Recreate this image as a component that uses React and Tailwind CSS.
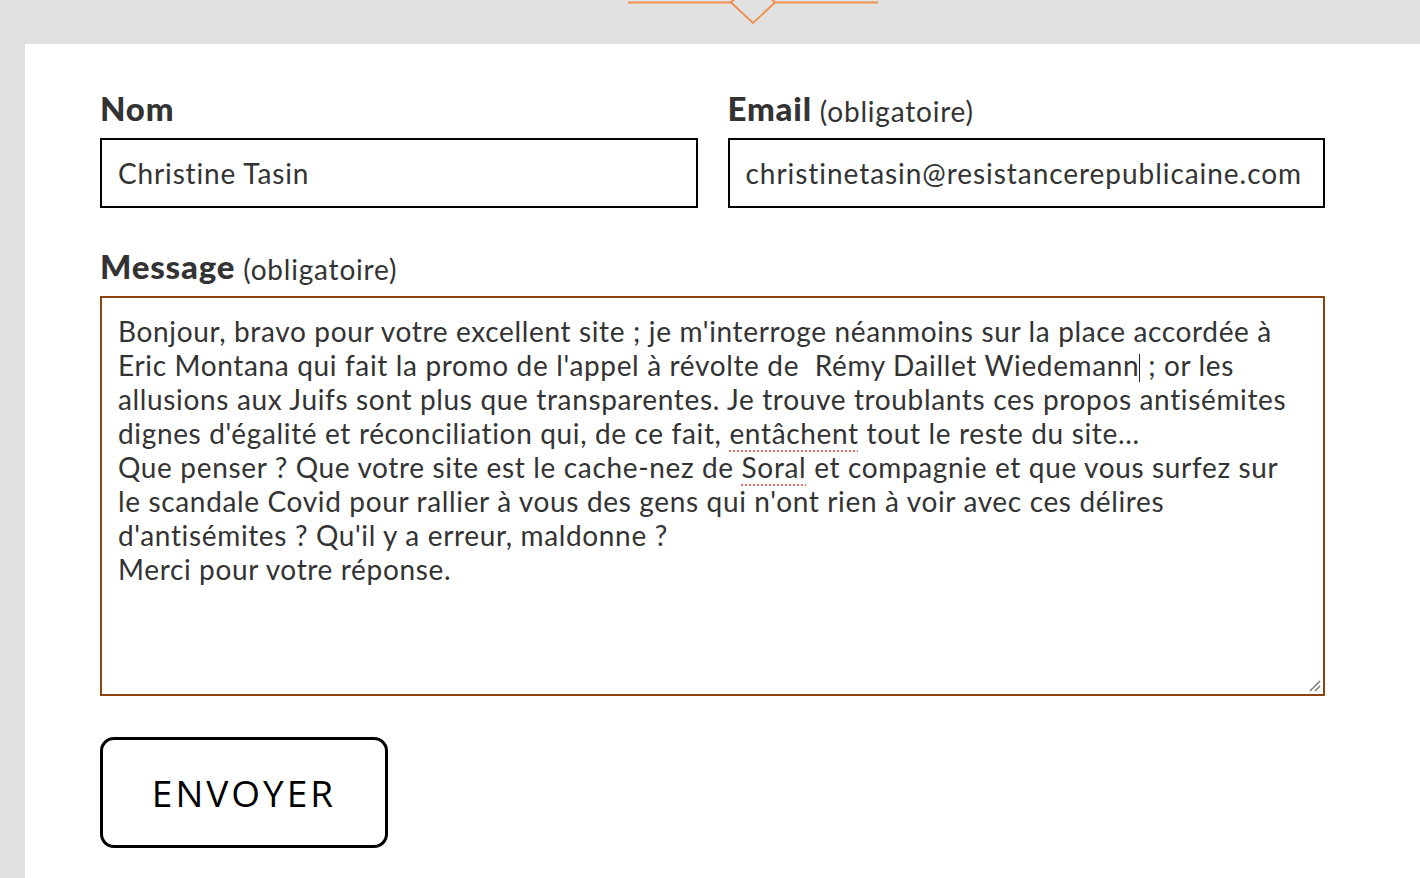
import React from 'react';

const lines = [
  [{ t: "Bonjour, bravo pour votre excellent site ; je m'interroge néanmoins sur la place accordée à" }],
  [{ t: "Eric Montana qui fait la promo de l'appel à révolte de  Rémy Daillet Wiedemann" }, { caret: true }, { t: " ; or les" }],
  [{ t: "allusions aux Juifs sont plus que transparentes. Je trouve troublants ces propos antisémites" }],
  [{ t: "dignes d'égalité et réconciliation qui, de ce fait, " }, { t: "entâchent", spell: true }, { t: " tout le reste du site..." }],
  [{ t: "Que penser ? Que votre site est le cache-nez de " }, { t: "Soral", spell: true }, { t: " et compagnie et que vous surfez sur" }],
  [{ t: "le scandale Covid pour rallier à vous des gens qui n'ont rien à voir avec ces délires" }],
  [{ t: "d'antisémites ? Qu'il y a erreur, maldonne ?" }],
  [{ t: "Merci pour votre réponse." }],
];

const Label = ({ name, required }) => (
  <div className="h-[47px] leading-none text-[#333] flex items-end pb-[13px]">
    <span className="text-[33px] font-black tracking-[0.8px]">{name}</span>
    {required && <span className="text-[28px] tracking-[0.8px] ml-[8px]">(obligatoire)</span>}
  </div>
);

export default function App() {
  return (
    <div className="min-h-screen bg-[#e1e1e1] font-['Lato',sans-serif]">
      <div className="h-[44px] pl-[628px]">
        <svg width="250" height="26" viewBox="0 0 250 26">
          <line x1="0" y1="2.5" x2="250" y2="2.5" stroke="#ee9150" strokeWidth="2" />
          <path d="M103 2.5 L125 -19.5 L147 2.5 L125 23 Z" fill="#e1e1e1" stroke="#ee9150" strokeWidth="2" />
        </svg>
      </div>
      <div className="ml-[25px] bg-white min-h-[834px] pl-[75px] pr-[95px] pt-[47px]">
        <div className="flex gap-[30px]">
          <div className="flex-1">
            <Label name="Nom" />
            <div className="h-[70px] border-2 border-black flex items-center px-[16px] text-[28px] tracking-[0.85px] text-[#333]">
              Christine Tasin
            </div>
          </div>
          <div className="flex-1">
            <Label name="Email" required />
            <div className="h-[70px] border-2 border-black flex items-center px-[16px] text-[28px] tracking-[0.95px] text-[#333] whitespace-nowrap overflow-hidden">
              christinetasin@resistancerepublicaine.com
            </div>
          </div>
        </div>
        <div className="mt-[41px]">
          <Label name="Message" required />
          <div className="relative h-[400px] border-2 border-[#8b4513] px-[16px] pt-[16px] text-[28px] tracking-[0.65px] leading-[34px] text-[#333]">
            {lines.map((line, i) => (
              <div key={i} className="h-[34px] whitespace-pre">
                {line.map((s, j) =>
                  s.caret ? (
                    <span key={j} className="inline-block w-px h-[28px] bg-[#222] align-[-6px]" />
                  ) : s.spell ? (
                    <span key={j} className="underline decoration-dotted decoration-[#f06a5e] decoration-2 underline-offset-[6px]">{s.t}</span>
                  ) : (
                    <span key={j}>{s.t}</span>
                  )
                )}
              </div>
            ))}
            <svg className="absolute right-[2px] bottom-[2px]" width="14" height="14" viewBox="0 0 14 14">
              <line x1="3" y1="13" x2="13" y2="3" stroke="#777" strokeWidth="1.5" />
              <line x1="8" y1="13" x2="13" y2="8" stroke="#777" strokeWidth="1.5" />
            </svg>
          </div>
        </div>
        <div className="pt-[41px] pb-[30px]">
          <button className="w-[288px] h-[111px] border-[3px] border-black rounded-[14px] bg-white text-black text-[37px] tracking-[3px] font-['Open_Sans',sans-serif]">
            ENVOYER
          </button>
        </div>
      </div>
    </div>
  );
}
